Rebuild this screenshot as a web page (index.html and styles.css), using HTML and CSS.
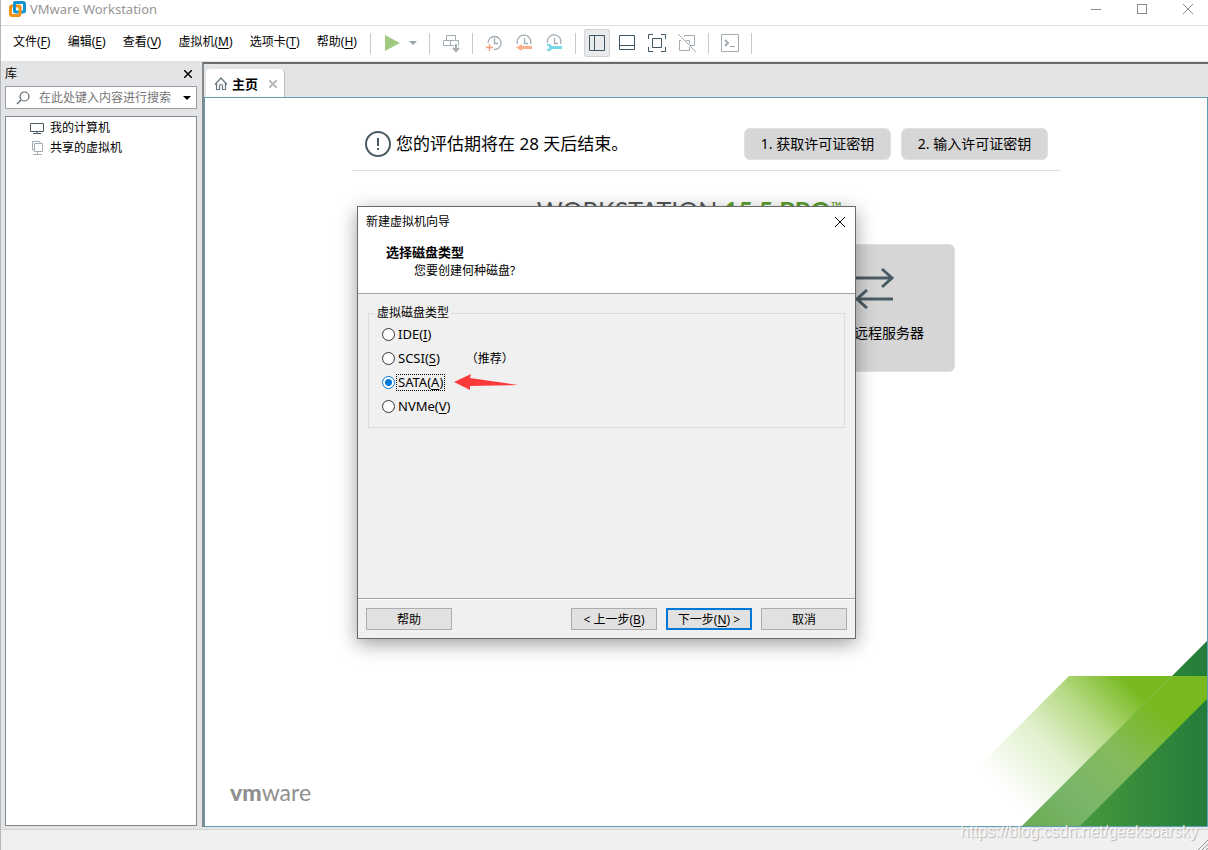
FILE: index.html
```html
<!DOCTYPE html>
<html lang="zh-CN">
<head>
<meta charset="utf-8">
<title>VMware Workstation</title>
<link rel="stylesheet" href="styles.css">
</head>
<body>
<div class="window">
  <header class="titlebar">
    <svg class="app-icon" width="18" height="18" viewBox="0 0 18 18" fill="none" stroke-width="3">
      <rect x="6.500" y="2.500" width="10" height="9.500" rx="1.500" stroke="#0f95d3"/>
      <rect x="2.500" y="6" width="9.500" height="9.500" rx="1.500" stroke="#f59213"/>
      <path d="M6.500 9V4Q6.500 2.500 8 2.500H12" stroke="#0f95d3"/>
    </svg>
    <span class="app-title">VMware Workstation</span>
    <div class="window-controls">
      <button aria-label="最小化"><svg width="12" height="12" viewBox="0 0 12 12"><path d="M1 6.500H11"/></svg></button>
      <button aria-label="最大化"><svg width="12" height="12" viewBox="0 0 12 12"><rect x="1.500" y="1.500" width="9" height="9"/></svg></button>
      <button aria-label="关闭"><svg width="12" height="12" viewBox="0 0 12 12"><path d="M1 1L11 11M11 1L1 11"/></svg></button>
    </div>
  </header>

  <div class="menubar">
    <nav class="menus">
      <button>文件(<u>F</u>)</button>
      <button>编辑(<u>E</u>)</button>
      <button>查看(<u>V</u>)</button>
      <button>虚拟机(<u>M</u>)</button>
      <button>选项卡(<u>T</u>)</button>
      <button>帮助(<u>H</u>)</button>
    </nav>
    <div class="toolbar">
      <div class="tool-group joined">
        <button class="tool" aria-label="开机"><svg width="20" height="20" viewBox="0 0 20 20"><path d="M3 2V18L18 10Z" fill="#9fca80"/></svg></button>
        <button class="tool narrow" aria-label="电源选项"><svg width="8" height="4" viewBox="0 0 8 4"><path d="M0 0H8L4 4Z" fill="#99a3aa"/></svg></button>
      </div>
      <div class="tool-group">
        <button class="tool muted" aria-label="发送 Ctrl+Alt+Del"><svg width="20" height="20" viewBox="0 0 20 20"><path d="M5.500 7.500V2.500H14.500V7.500M2.500 7.500H17.500V12.500H2.500ZM9.500 7.500V12.500"/><path d="M15 12V18" stroke="#fff" stroke-width="4"/><path d="M15 11V18M12 15L15 18L18 15" stroke-width="2"/></svg></button>
      </div>
      <div class="tool-group">
        <button class="tool muted" aria-label="拍摄快照"><svg width="20" height="20" viewBox="0 0 20 20"><path d="M4 10A6.500 6.500 0 1 1 10 16.500M10.500 5V10.500H14" stroke-width="1.300"/><path d="M5.500 11V18M2 14.500H9" stroke="#f79a78" stroke-width="1.300"/></svg></button>
        <button class="tool muted" aria-label="恢复快照"><svg width="20" height="20" viewBox="0 0 20 20"><path d="M3.500 11A6.800 6.800 0 1 1 16.500 11M10.500 5V10.500H14" stroke-width="1.300"/><path d="M2 14.500L8 11V13H18V16H8V18Z" fill="#fbae8b" stroke="none"/></svg></button>
        <button class="tool muted" aria-label="管理快照"><svg width="20" height="20" viewBox="0 0 20 20"><path d="M3.500 10A6.800 6.800 0 1 1 16.500 11M10.500 5V10.500H14" stroke-width="1.300"/><path d="M3 11H6L8 13H18V16H8L6 18H3V16H5V13H3Z" fill="#74d8e8" stroke="none"/></svg></button>
      </div>
      <div class="tool-group">
        <button class="tool active" aria-label="显示库"><svg width="20" height="20" viewBox="0 0 20 20"><path d="M2.500 2.500H17.500V17.500H2.500ZM7.500 2.500V17.500"/></svg></button>
        <button class="tool" aria-label="缩略图栏"><svg width="20" height="20" viewBox="0 0 20 20"><path d="M2.500 2.500H17.500V16.500H2.500ZM2.500 12.500H17.500"/></svg></button>
        <button class="tool" aria-label="全屏"><svg width="20" height="20" viewBox="0 0 20 20"><path d="M1.500 6V1.500H6M14 1.500H18.500V6M18.500 14V18.500H14M6 18.500H1.500V14M5.500 5.500H14.500V14.500H5.500Z"/></svg></button>
        <button class="tool muted" aria-label="Unity"><svg width="20" height="20" viewBox="0 0 20 20"><path d="M7.500 4V2.500H17.500V12.500H13M4 7.500H2.500V17.500H12.500V14M9 7.500H12.500V11M1 1L19 19"/></svg></button>
      </div>
      <div class="tool-group last">
        <button class="tool muted" aria-label="控制台"><svg width="20" height="20" viewBox="0 0 20 20"><path d="M1.500 1.500H18.500V18.500H1.500ZM10 13.500H15"/><path d="M5 7L8 10L5 13" stroke-width="2"/></svg></button>
      </div>
    </div>
  </div>

  <div class="workspace">
    <aside class="library">
      <div class="library-head">
        <span>库</span>
        <button aria-label="关闭库"><svg width="8" height="8" viewBox="0 0 8 8"><path d="M0 0L8 8M8 0L0 8" stroke="#000" stroke-width="1.500"/></svg></button>
      </div>
      <div class="search">
        <svg width="14" height="14" viewBox="0 0 14 14" fill="none" stroke="#56666f" stroke-width="1.200"><circle cx="8.500" cy="5.500" r="4.500"/><path d="M5 9L1 13"/></svg>
        <input type="text" aria-label="搜索" placeholder="在此处键入内容进行搜索">
        <button aria-label="搜索选项"><svg width="8" height="4" viewBox="0 0 8 4"><path d="M0 0H8L4 4Z"/></svg></button>
      </div>
      <ul class="tree">
        <li><svg width="16" height="16" viewBox="0 0 16 16" fill="none" stroke="#4a5a64"><path d="M1.500 3.500H14.500V11.500H1.500ZM8 12V13.500M4 13.500H12"/></svg>我的计算机</li>
        <li><svg width="16" height="16" viewBox="0 0 16 16" fill="none" stroke="#a3adb3"><path d="M5.500 3.500H13.500V11.500H5.500ZM11 3V1.500H3.500V10H5M8.500 12V14.500M4 14.500H13"/></svg>共享的虚拟机</li>
      </ul>
    </aside>

    <main class="main">
      <div class="tabs">
        <div class="tab">
          <svg width="14" height="14" viewBox="0 0 14 14" fill="none" stroke="#66757e" stroke-width="1.200"><path d="M1 7.500L7 1L13 7.500M2.500 6.500V12.500H5.500V9Q5.500 7.500 7 7.500T8.500 9V12.500H11.500V6.500"/></svg>
          <span>主页</span>
          <button aria-label="关闭标签"><svg width="8" height="8" viewBox="0 0 8 8"><path d="M0 0L8 8M8 0L0 8" stroke="#bbb" stroke-width="2"/></svg></button>
        </div>
      </div>
      <section class="home">
        <div class="notice">
          <svg width="26" height="26" viewBox="0 0 26 26" fill="none" stroke="#4b5b65" stroke-width="2"><circle cx="13" cy="13" r="12"/><path d="M13 7V15M13 17V19"/></svg>
          <p>您的评估期将在 28 天后结束。</p>
          <button>1. 获取许可证密钥</button>
          <button>2. 输入许可证密钥</button>
        </div>
        <h1 class="product">WORKSTATION <b>15.5 PRO</b><sup>™</sup></h1>
        <div class="cards">
          <button class="card">
            <svg width="40" height="42" viewBox="0 0 40 42" fill="none" stroke="#4b5b65" stroke-width="3"><path d="M1 11H37M27 2L37 11L27 20M38 32H2M12 23L2 32L12 41"/></svg>
            <span>连接远程服务器</span>
          </button>
        </div>
        <div class="brand"><b>vm</b>ware</div>
        <svg class="corner-art" width="230" height="190" viewBox="0 0 230 190">
          <defs>
            <linearGradient id="dark" x1="45" y1="0" x2="230" y2="0" gradientUnits="userSpaceOnUse"><stop offset="0" stop-color="#5aa342"/><stop offset=".5" stop-color="#3d913c"/><stop offset="1" stop-color="#227d3a"/></linearGradient>
            <linearGradient id="fade" x1="0" y1="129" x2="117" y2="12" gradientUnits="userSpaceOnUse"><stop offset="0" stop-color="#fff"/><stop offset=".4" stop-color="#e0f0cc"/><stop offset=".7" stop-color="#b4d982"/><stop offset="1" stop-color="#78b91f"/></linearGradient>
            <linearGradient id="band" x1="72" y1="190" x2="190" y2="55" gradientUnits="userSpaceOnUse"><stop offset="0" stop-color="#6fae58"/><stop offset=".2" stop-color="#78b56c"/><stop offset=".55" stop-color="#85bb5c"/><stop offset=".9" stop-color="#78b91f"/></linearGradient>
          </defs>
          <path d="M230 5V190H45Z" fill="url(#dark)"/>
          <path d="M92 40H195L45 190H0V132Z" fill="url(#fade)"/>
          <path d="M195 40H230V63L103 190H45Z" fill="url(#band)"/>
        </svg>
      </section>
    </main>
  </div>

  <footer class="statusbar">
    <svg width="10" height="10" viewBox="0 0 10 10" stroke="#999" fill="none"><path d="M0 10L10 0M4 10L10 4M8 10L10 8"/></svg>
  </footer>
</div>

<form class="dialog" role="dialog" aria-labelledby="wizard-title">
  <div class="dialog-head">
    <div class="dialog-bar">
      <span id="wizard-title">新建虚拟机向导</span>
      <button type="button" aria-label="关闭"><svg width="12" height="12" viewBox="0 0 12 12"><path d="M1 1L11 11M11 1L1 11" stroke="#000"/></svg></button>
    </div>
    <h2>选择磁盘类型</h2>
    <p>您要创建何种磁盘?</p>
  </div>
  <div class="dialog-body">
    <fieldset>
      <legend>虚拟磁盘类型</legend>
      <div class="option"><input type="radio" name="disk" id="ide"><label for="ide">IDE(<u>I</u>)</label></div>
      <div class="option"><input type="radio" name="disk" id="scsi"><label for="scsi">SCSI(<u>S</u>)</label><span class="hint">（推荐）</span></div>
      <div class="option"><input type="radio" name="disk" id="sata" checked><label for="sata">SATA(<u>A</u>)</label>
        <svg class="arrow" width="64" height="18" viewBox="0 0 64 18"><path d="M0 9L17 1L16 5L64 12L16 13V17Z" fill="#fb3b3b"/></svg></div>
      <div class="option"><input type="radio" name="disk" id="nvme"><label for="nvme">NVMe(<u>V</u>)</label></div>
    </fieldset>
  </div>
  <div class="dialog-foot">
    <button type="button" class="help">帮助</button>
    <button type="button">&lt; 上一步(<u>B</u>)</button>
    <button type="button" class="primary">下一步(<u>N</u>) &gt;</button>
    <button type="button">取消</button>
  </div>
</form>
<div class="watermark">https://blog.csdn.net/geeksoarsky</div>
</body>
</html>
```
FILE: styles.css
```css
* { box-sizing: border-box; }
body {
  margin: 0;
  font: 12px/16px "Noto Sans", "Noto Sans CJK SC", sans-serif;
  color: #000;
  background: #fff;
}
button {
  margin: 0;
  padding: 0;
  border: 0;
  background: none;
  font: inherit;
  color: inherit;
}
button svg { display: block; }
h1, h2, p, ul { margin: 0; padding: 0; font-weight: normal; }
u { text-underline-offset: 2px; }

.window {
  display: flex;
  flex-direction: column;
  height: 100vh;
  border-left: 1px solid #b4b7ba;
  background: #e3e4e6;
}

.titlebar {
  display: flex;
  flex: none;
  align-items: flex-start;
  height: 26px;
  padding-left: 7px;
  border-bottom: 1px solid #e0e0e0;
  background: #fff;
}
.app-title {
  padding: 1px 0 0 4px;
  font-size: 13px;
  color: #969696;
}
.window-controls { display: flex; gap: 6px; margin-left: auto; }
.window-controls button {
  display: flex;
  justify-content: center;
  width: 40px;
  padding-top: 3px;
}
.window-controls svg { fill: none; stroke: #8e8e8e; }

.menubar {
  display: flex;
  flex: none;
  align-items: center;
  height: 35px;
  padding-bottom: 1px;
  background: #fff;
}
.menus {
  display: flex;
  flex: none;
  justify-content: space-between;
  width: 356px;
  padding: 0 0 2px 12px;
  white-space: nowrap;
}
.toolbar { display: flex; margin-left: 13px; }
.tool-group {
  display: flex;
  align-items: center;
  gap: 4px;
  padding: 0 8px 0 9px;
  background: linear-gradient(#c8c8c8, #c8c8c8) left center / 1px 21px no-repeat;
}
.tool-group.joined { gap: 0; }
.tool-group.last {
  padding-right: 9px;
  background:
    linear-gradient(#c8c8c8, #c8c8c8) left center / 1px 21px no-repeat,
    linear-gradient(#c8c8c8, #c8c8c8) right center / 1px 21px no-repeat;
}
.tool {
  display: flex;
  align-items: center;
  justify-content: center;
  width: 26px;
  height: 28px;
  border-radius: 3px;
}
.tool.narrow { width: 16px; }
.tool.active { background: #e8eaeb; box-shadow: inset 0 0 0 1px #d2d4d5; }
.tool svg { fill: none; stroke: #3e5563; }
.tool.muted svg { stroke: #a3adb4; }
.joined .tool svg { stroke: none; }

.workspace {
  display: grid;
  grid-template-columns: 196px 1fr;
  column-gap: 5px;
  flex: 1;
  min-height: 0;
  padding: 1px 0 2px;
}
.library { display: flex; flex-direction: column; padding: 0 0 1px 4px; }
.library-head {
  display: flex;
  align-items: center;
  justify-content: space-between;
  height: 24px;
  padding-right: 5px;
}
.search {
  display: flex;
  align-items: center;
  height: 23px;
  padding: 0 5px 0 10px;
  border: 1px solid #9b9fa3;
  background: #fff;
}
.search input {
  flex: 1;
  min-width: 0;
  padding: 0 0 0 9px;
  border: 0;
  outline: 0;
  font: inherit;
}
.search input::placeholder { color: #767676; }
.tree {
  flex: 1;
  margin-top: 7px;
  padding: 1px 0 0 23px;
  border: 1px solid #828790;
  background: #fff;
  list-style: none;
}
.tree li { display: flex; align-items: center; gap: 5px; height: 20px; }

.main {
  display: flex;
  flex-direction: column;
  min-width: 0;
  border-top: 2px solid #696c6f;
  border-left: 2px solid #85898c;
}
.tabs { flex: none; height: 33px; padding: 5px 0 0 2px; }
.tab {
  display: flex;
  align-items: center;
  width: 79px;
  height: 28px;
  padding: 2px 7px 0 8px;
  border-right: 1px solid #b8bbbe;
  border-radius: 4px 4px 0 0;
  background: #fff;
  font-size: 13px;
  font-weight: bold;
}
.tab span { margin: 0 auto 0 4px; }
.home {
  position: relative;
  display: flex;
  flex-direction: column;
  align-items: center;
  flex: 1;
  min-height: 0;
  border: 1px solid #5f9db5;
  background: #fff;
}
.notice {
  display: flex;
  align-items: center;
  width: 708px;
  max-width: 100%;
  height: 73px;
  padding: 20px 12px 0 13px;
  border-bottom: 1px solid #dedede;
}
.notice p { margin: 0 auto 0 5px; font-size: 17px; line-height: 24px; }
.notice button {
  width: 147px;
  height: 32px;
  margin-left: 10px;
  border: 1px solid #e0e0e0;
  border-radius: 6px;
  background: #d6d6d6;
  font-size: 14px;
}
.product {
  margin: 23px 34px 0 0;
  font: 25px/32px Lato, sans-serif;
  color: #55585a;
  white-space: nowrap;
}
.product b, .product sup { color: #5b9e2d; }
.product sup { font-size: 14px; line-height: 0; vertical-align: 8px; }
.cards { display: flex; justify-content: flex-end; width: 498px; margin-top: 18px; }
.card {
  display: flex;
  flex-direction: column;
  align-items: center;
  width: 160px;
  height: 128px;
  padding-top: 22px;
  border: 1px solid #dfdfdf;
  border-radius: 6px;
  background: #d6d6d6;
  font-size: 14px;
  line-height: 20px;
}
.card span { margin-top: 14px; }
.brand {
  align-self: flex-start;
  margin: auto 0 18px 25px;
  font: 23px/32px Lato, sans-serif;
  color: #8f8f8f;
}
.brand b { font-weight: 900; }
.corner-art { position: absolute; right: 0; bottom: 0; }

.statusbar {
  display: flex;
  flex: none;
  align-items: flex-end;
  justify-content: flex-end;
  height: 21px;
  border-top: 1px solid #d5d5d5;
  background: #f0f0f0;
}

.dialog {
  position: absolute;
  top: 206px;
  left: 357px;
  display: flex;
  flex-direction: column;
  width: 499px;
  height: 433px;
  border: 1px solid #6a6a6a;
  background: #f0f0f0;
  box-shadow: 0 5px 18px rgba(0, 0, 0, .38);
}
.dialog-head {
  height: 87px;
  border-bottom: 1px solid #a0a0a0;
  background: #fff;
}
.dialog-bar {
  display: flex;
  justify-content: space-between;
  align-items: center;
  height: 29px;
  padding: 0 9px 0 8px;
}
.dialog-head h2 {
  padding: 7px 0 0 28px;
  font-size: 13px;
  line-height: 18px;
  font-weight: bold;
}
.dialog-head p { padding-left: 56px; line-height: 20px; }
.dialog-body { flex: 1; padding: 11px 10px 0; }
fieldset {
  margin: 0;
  padding: 1px 13px 9px;
  border: 1px solid #dcdcdc;
}
legend { margin-left: -7px; padding: 0 2px; }
.option {
  display: flex;
  align-items: center;
  height: 24px;
  font-size: 13px;
}
.option input {
  appearance: none;
  width: 13px;
  height: 13px;
  margin: 0 2px 0 0;
  border: 1px solid #333;
  border-radius: 50%;
  background: #fff;
}
.option input:checked {
  border-color: #0078d7;
  background: radial-gradient(circle, #0078d7 0 3px, #fff 4px);
}
.option label { padding: 0 1px; line-height: 15px; }
.option input:checked + label { outline: 1px dotted #000; }
.hint { margin-left: 25px; padding-top: 2px; font-size: 12px; }
.arrow { margin-left: 10px; }
.dialog-foot {
  display: flex;
  gap: 9px;
  padding: 9px 8px 8px;
  border-top: 1px solid #a0a0a0;
  box-shadow: inset 0 1px #fff;
}
.dialog-foot button {
  width: 86px;
  height: 22px;
  padding-top: 2px;
  border: 1px solid #adadad;
  background: #e1e1e1;
  white-space: nowrap;
}
.dialog-foot .help { margin-right: auto; }
.dialog-foot .primary { border: 2px solid #0078d7; }

.watermark {
  position: absolute;
  right: 10px;
  bottom: 8px;
  font: 16px/20px "Liberation Sans", sans-serif;
  color: rgba(255, 255, 255, .8);
  text-shadow: 1px 1px 1px rgba(0, 0, 0, .25);
}
```
